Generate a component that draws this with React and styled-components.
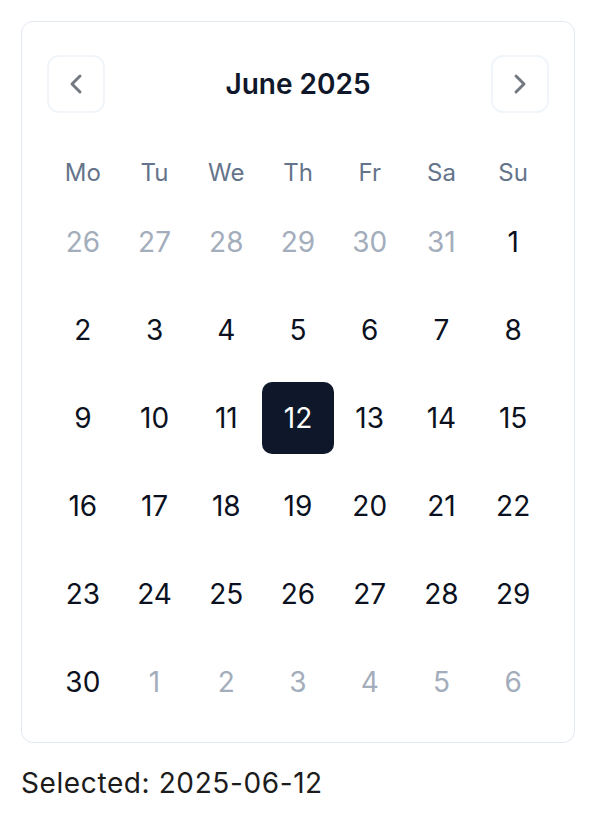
import React, { useState } from 'react';
import styled, { createGlobalStyle } from 'styled-components';
import { ChevronLeft, ChevronRight } from 'lucide-react';

const GlobalStyle = createGlobalStyle`
  * { box-sizing: border-box; }
  body {
    margin: 0;
    background: #ffffff;
    font-family: Inter, "Noto Sans", sans-serif;
  }
`;

const Page = styled.div`
  padding: 21px;
`;

const Card = styled.div`
  width: 554px;
  border: 1px solid #e2e8f0;
  border-radius: 12px;
  padding: 33px 25px 24px;
  background: #fff;
`;

const Header = styled.div`
  display: flex;
  align-items: center;
  justify-content: space-between;
  height: 58px;
  margin-bottom: 41px;
`;

const NavButton = styled.button`
  width: 58px;
  height: 58px;
  display: flex;
  align-items: center;
  justify-content: center;
  background: #fff;
  border: 2px solid #f1f5f9;
  border-radius: 12px;
  color: #737983;
  padding: 0;
  cursor: pointer;
`;

const Title = styled.div`
  font-size: 28px;
  font-weight: 600;
  color: #0f172a;
`;

const Grid = styled.div`
  display: grid;
  grid-template-columns: repeat(7, 1fr);
  grid-template-rows: 36px repeat(6, 72px);
  row-gap: 16px;
`;

const Weekday = styled.div`
  display: flex;
  align-items: center;
  justify-content: center;
  font-size: 24px;
  color: #64748b;
`;

const Day = styled.button`
  display: flex;
  align-items: center;
  justify-content: center;
  border: none;
  border-radius: 10px;
  padding: 0;
  font-family: inherit;
  font-size: 28px;
  cursor: pointer;
  background: ${(p) => (p.$selected ? '#0f172a' : 'transparent')};
  color: ${(p) => (p.$selected ? '#ffffff' : p.$outside ? '#a3adbb' : '#0b1120')};
`;

const Selected = styled.div`
  margin-top: 23px;
  font-size: 28px;
  line-height: 34px;
  letter-spacing: 0.6px;
  color: #1c1c1c;
`;

const WEEKDAYS = ['Mo', 'Tu', 'We', 'Th', 'Fr', 'Sa', 'Su'];

const buildDays = () => {
  const days = [];
  [26, 27, 28, 29, 30, 31].forEach((d) => days.push({ d, m: 5 }));
  for (let d = 1; d <= 30; d++) days.push({ d, m: 6 });
  [1, 2, 3, 4, 5, 6].forEach((d) => days.push({ d, m: 7 }));
  return days;
};

const pad = (n) => String(n).padStart(2, '0');

const App = () => {
  const [selected, setSelected] = useState({ d: 12, m: 6 });
  const days = buildDays();

  return (
    <Page>
      <GlobalStyle />
      <Card>
        <Header>
          <NavButton aria-label="Previous month">
            <ChevronLeft size={32} strokeWidth={2.2} />
          </NavButton>
          <Title>June 2025</Title>
          <NavButton aria-label="Next month">
            <ChevronRight size={32} strokeWidth={2.2} />
          </NavButton>
        </Header>
        <Grid>
          {WEEKDAYS.map((w) => (
            <Weekday key={w}>{w}</Weekday>
          ))}
          {days.map((day, i) => (
            <Day
              key={i}
              $outside={day.m !== 6}
              $selected={day.m === selected.m && day.d === selected.d}
              onClick={() => setSelected(day)}
            >
              {day.d}
            </Day>
          ))}
        </Grid>
      </Card>
      <Selected>
        Selected: 2025-{pad(selected.m)}-{pad(selected.d)}
      </Selected>
    </Page>
  );
};

export default App;
